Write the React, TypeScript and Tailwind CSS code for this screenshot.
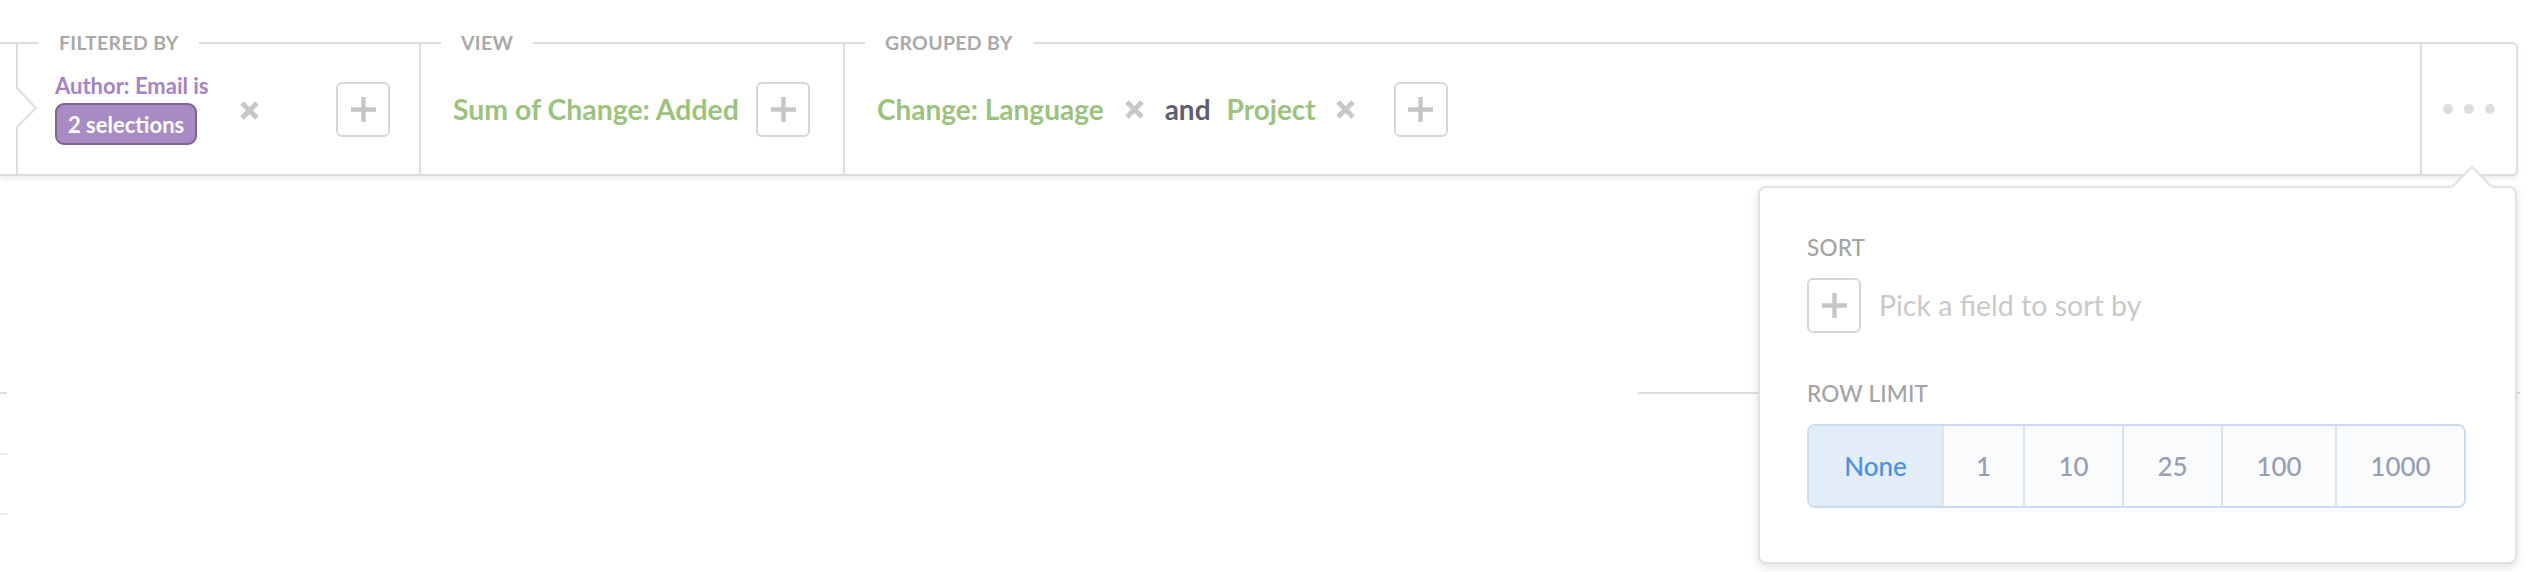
import React from "react";

function XIcon({ className = "" }: { className?: string }) {
  return (
    <svg viewBox="0 0 21 21" className={className} width="21" height="21">
      <path d="M3 3 L18 18 M18 3 L3 18" stroke="#c7c7c7" strokeWidth="5" fill="none" />
    </svg>
  );
}

function PlusBox({ className = "" }: { className?: string }) {
  return (
    <div
      className={
        "flex h-[55px] w-[54px] shrink-0 items-center justify-center rounded-[6px] border-2 border-[#d6d6d6] bg-white " +
        className
      }
    >
      <svg viewBox="0 0 25 25" width="25" height="25">
        <path d="M12.5 0 V25 M0 12.5 H25" stroke="#c6c6c6" strokeWidth="4.4" fill="none" />
      </svg>
    </div>
  );
}

function SectionLabel({ children, className = "" }: { children: React.ReactNode; className?: string }) {
  return (
    <div
      className={
        "absolute -top-[13px] bg-white px-[20px] text-[19.5px] font-bold leading-[24px] tracking-[0.3px] text-[#a9a9a9] " +
        className
      }
    >
      {children}
    </div>
  );
}

export default function App() {
  const segments: { label: string; w: string; active?: boolean }[] = [
    { label: "None", w: "w-[133px]", active: true },
    { label: "1", w: "w-[81px]" },
    { label: "10", w: "w-[99px]" },
    { label: "25", w: "w-[99px]" },
    { label: "100", w: "w-[114px]" },
    { label: "1000", w: "flex-1" },
  ];

  return (
    <div className="h-[572px] w-[2546px] overflow-hidden bg-white font-['Lato','Noto_Sans',sans-serif]">
      {/* Query bar */}
      <div className="relative mt-[42px] flex h-[134px] w-[2518px] rounded-r-[6px] border-y-2 border-r-2 border-[#dedede] bg-white shadow-[0_3px_4px_rgba(0,0,0,0.07)]">
        {/* cropped previous section + chevron divider */}
        <div className="relative w-[18px] shrink-0">
          <svg className="absolute left-[15px] top-0 h-[130px] w-[24px] overflow-visible" viewBox="0 0 24 130">
            <path d="M2 0 V44 L21 64 L2 83 V130" stroke="#dedede" strokeWidth="2" fill="none" />
          </svg>
        </div>

        {/* FILTERED BY */}
        <div className="relative flex w-[403px] shrink-0 items-center border-r-2 border-[#dedede] pl-[37px] pr-[29px]">
          <SectionLabel className="left-[21px]">FILTERED BY</SectionLabel>
          <div className="flex flex-col items-start">
            <div className="text-[22px] font-bold leading-[26px] text-[#a484c1]">Author: Email is</div>
            <div className="mt-[4px] flex h-[42px] items-center rounded-[9px] border-2 border-[#7d6491] bg-[#a98bc4] px-[11px] text-[22px] font-bold text-white">
              2 selections
            </div>
          </div>
          <XIcon className="ml-[30px] mt-[2px]" />
          <PlusBox className="ml-auto" />
        </div>

        {/* VIEW */}
        <div className="relative flex w-[424px] shrink-0 items-center border-r-2 border-[#dedede] pl-[32px] pr-[33px]">
          <SectionLabel className="left-[20px]">VIEW</SectionLabel>
          <div className="whitespace-nowrap text-[28.4px] font-bold text-[#9bc37e]">Sum of Change: Added</div>
          <PlusBox className="ml-auto" />
        </div>

        {/* GROUPED BY */}
        <div className="relative flex flex-1 items-center border-r-2 border-[#dedede] pl-[32px]">
          <SectionLabel className="left-[20px]">GROUPED BY</SectionLabel>
          <div className="text-[28px] font-bold text-[#9bc37e]">Change: Language</div>
          <XIcon className="ml-[20px]" />
          <div className="ml-[20px] text-[28px] font-bold text-[#5f5f6e]">and</div>
          <div className="ml-[16px] text-[28px] font-bold text-[#9bc37e]">Project</div>
          <XIcon className="ml-[19px]" />
          <PlusBox className="ml-[38px]" />
        </div>

        {/* More */}
        <div className="flex w-[94px] shrink-0 items-center justify-center gap-[11px]">
          <div className="h-[10px] w-[10px] rounded-full bg-[#dddddd]" />
          <div className="h-[10px] w-[10px] rounded-full bg-[#dddddd]" />
          <div className="h-[10px] w-[10px] rounded-full bg-[#dddddd]" />
        </div>

        {/* Popover */}
        <div className="absolute right-[-1px] top-[calc(100%+12px)] z-10 w-[759px] rounded-[8px] border-2 border-[#e2e2e2] bg-white pb-[54px] pl-[47px] pt-[47px] shadow-[0_3px_10px_rgba(0,0,0,0.12)]">
          <svg className="absolute -top-[22px] right-[22px] h-[24px] w-[42px] overflow-visible" viewBox="0 0 42 24">
            <path d="M0 22 L21 1 L42 22" stroke="#e2e2e2" strokeWidth="2" fill="white" />
            <rect x="1" y="21" width="40" height="4" fill="white" />
          </svg>
          <div className="text-[22.5px] font-medium leading-[26px] tracking-[0.2px] text-[#a3a3a3]">SORT</div>
          <div className="mt-[17px] flex items-center">
            <PlusBox className="h-[53px]" />
            <div className="ml-[18px] text-[28.5px] text-[#c9c9c9]">Pick a field to sort by</div>
          </div>
          <div className="mt-[48px] text-[22.5px] font-medium leading-[26px] tracking-[0.2px] text-[#a3a3a3]">ROW LIMIT</div>
          <div className="mt-[17px] flex h-[84px] w-[659px] overflow-hidden rounded-[8px] border-2 border-[#c9dcf2]">
            {segments.map((s, i) => (
              <div
                key={s.label}
                className={
                  "flex items-center justify-center text-[26px] font-medium " +
                  s.w +
                  (i > 0 ? " border-l-2 border-[#dfe3ea]" : "") +
                  (s.active ? " bg-[#e3edf8] text-[#4a90e2]" : " bg-[#fafbfd] text-[#989eb4]")
                }
              >
                {s.label}
              </div>
            ))}
          </div>
        </div>
      </div>

      {/* Background grid remnants */}
      <div className="mt-[216px] flex items-start">
        <div className="h-[2px] w-[7px] bg-[#dddddd]" />
        <div className="ml-[1631px] h-[2px] w-[882px] bg-[#dedede]" />
      </div>
      <div className="mt-[59px] h-[2px] w-[7px] bg-[#ececec]" />
      <div className="mt-[58px] h-[2px] w-[7px] bg-[#ececec]" />
    </div>
  );
}
